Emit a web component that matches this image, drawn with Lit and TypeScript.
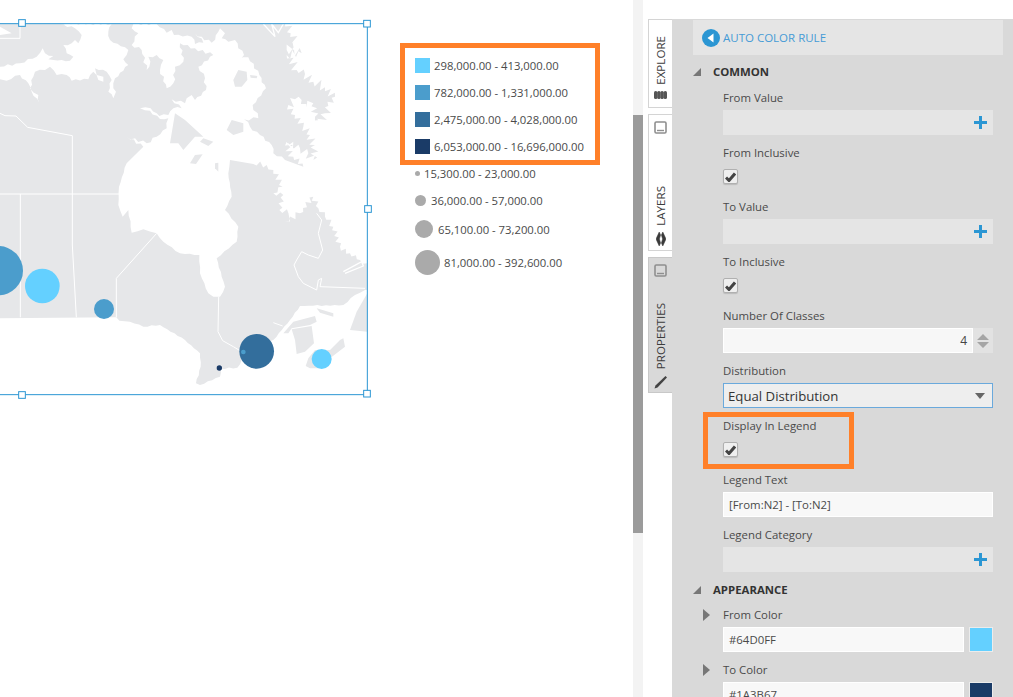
import { LitElement, html, css, svg } from "lit";
import { customElement } from "lit/decorators.js";

const LAND = "#e6e7e9";

let seed = 7;
const rnd = () => {
  seed = (seed * 16807) % 2147483647;
  return seed / 2147483647;
};
// Roughens a hand-traced coast: long edges get a deterministic zigzag.
function coast(src: string, amp: number, step = 11): string {
  const n = src.match(/-?\d+/g)!.map(Number);
  const out: string[] = [];
  for (let i = 0; i + 1 < n.length; i += 2) {
    const x = n[i], y = n[i + 1];
    out.push(`${x},${y}`);
    if (i + 3 < n.length && amp > 0) {
      const dx = n[i + 2] - x, dy = n[i + 3] - y;
      const len = Math.hypot(dx, dy);
      const k = Math.floor(len / step);
      for (let j = 1; j < k; j++) {
        const t = j / k;
        const a = (j % 2 ? 1 : -1) * amp * (0.3 + rnd() * 0.9);
        out.push(`${(x + dx * t - (dy / len) * a).toFixed(1)},${(y + dy * t + (dx / len) * a).toFixed(1)}`);
      }
    }
  }
  return out.join(" ");
}

const water = [
  "M" +
    coast("855,70 872,100 890,130 860,150 905,160 860,165 890,210 915,222 940,245 975,262 1005,290 985,318 975,340 962,370 945,350 940,310 920,322 905,300 885,298 865,315 885,345 910,380 930,405 945,435 940,480 925,460 900,445 860,425 880,470 910,500", 14, 8) + " " +
    coast("855,480 820,460 815,435 780,405 750,380 732,358 775,355 758,315 798,265 778,225 745,172 715,180 732,165 705,120 685,125 665,115 675,100 660,85 655,95 635,128 585,100 610,128 585,132 575,110 522,105 515,90 500,98 470,72 400,72 395,85 415,100 395,135 425,150 440,210 448,200 445,170 470,165 490,180 480,210 500,265 520,250 525,200 550,185 540,130 585,145 640,165 595,200 615,235 618,270 585,300 575,285 560,295 555,310 515,298 545,325 520,325 505,345 478,348 452,325 420,325 450,332 480,357 505,355 500,385 470,410 440,430 380,410 430,440", 4, 11) + " " +
    coast("380,490 357,560 355,615 368,650 385,630 395,698 430,688 470,700 490,725 540,760 598,765 600,820 625,880 640,890 660,890 675,860 665,830 650,775 710,725 715,680 675,630 695,590 685,520 690,480", 1.5, 14) + " " +
    coast("760,492 800,495 820,510 848,560 820,580 850,585 838,630 880,640 855,665 900,640 940,590 955,625 975,650 1000,680 1020,740 1050,760 1080,780 1102,790", 8, 9) +
    " 1110,790 1110,60 855,60 Z",
  "M" + coast("0,200 60,190 110,170 128,145 135,160 160,168 145,178 160,180 210,182 220,170 200,160 190,135 215,130 225,120 235,130 245,105 225,85 180,72 335,72 325,95 330,120 385,150 380,165 370,178 385,195 345,235 340,265 348,275 340,295 325,275 335,240 320,215 285,205 290,225 310,230 310,245 295,240 280,215 265,238 215,242 200,225 170,225 150,200 135,210 105,215 100,230 90,265 115,285 118,308 95,275 85,250 60,225 20,242 0,238", 3, 11) + " Z",
  "M0,80 L35,100 0,105 Z",
  "M-5,955 L349,952 " + coast("358,962 390,965 430,980 480,975 555,1020 600,1060 602,1100 588,1150 600,1155 660,1130 662,1106 712,1103 740,1060 820,1020 870,960 900,918 1030,915 1065,885 1095,870", 1.5, 12) + " 1110,870 1110,1195 -5,1195 Z",
];
const islands = [
  "M525,340 L555,360 610,410 585,410 550,450 535,430 510,430 Z",
  "M610,415 L640,425 625,438 600,425 Z",
  "M570,490 L585,465 608,463 588,492 Z",
  "M645,490 L655,488 655,515 645,505 Z",
  "M680,390 L695,360 730,370 730,395 700,405 Z",
  "M700,240 L715,210 740,215 742,240 725,260 705,260 Z",
  "M750,225 L772,228 770,235 752,233 Z",
  "M1102,880 L1070,935 1050,990 1102,995 Z",
  "M875,988 L935,978 942,1030 915,1055 890,1062 885,1020 Z",
  "M850,1000 L880,965 945,948 950,965 930,975 875,985 865,1000 Z",
  "M917,1098 L925,1075 945,1050 990,1050 1020,1020 1030,1015 1035,1040 990,1075 960,1105 930,1105 Z",
  "M950,925 L1000,940 1000,950 960,938 Z",
];
const borders = [
  "0,340 15,347 48,348 83,382 217,407 217,735 229,952",
  "0,582 357,582",
  "61,582 61,952",
  "470,700 349,835 349,952",
  "656,890 654,995 668,1022 700,1040 725,1055",
  "950,640 965,660 955,700 968,750 955,775 925,765 905,755 890,780 882,795 895,830 910,850 950,870 955,840 965,835 960,860 1095,865",
  "60,72 60,115 0,115",
  "820,968 848,978",
];
const spikes = [
  "M790,72 L825,110 815,72 835,98 850,72",
  "M1030,815 L1085,785 1090,798 1035,820",
  "M862,430 L935,500",
];
const circles: [number, number, number, string][] = [
  [-5, 812, 74, "#4b9dcc"],
  [127, 858, 52, "#64d0ff"],
  [312, 927, 30, "#4b9dcc"],
  [770, 1054, 52, "#336e9c"],
  [730, 1056, 7, "#4b9dcc"],
  [965, 1077, 30, "#64d0ff"],
  [658, 1104, 8, "#1a3b67"],
];
const handles: [number, number][] = [[66, 69], [1101, 71], [1104, 627], [66, 1185], [1101, 1181]];

const swatches: [string, string][] = [
  ["#64d0ff", "298,000.00 - 413,000.00"],
  ["#4b9dcc", "782,000.00 - 1,331,000.00"],
  ["#336e9c", "2,475,000.00 - 4,028,000.00"],
  ["#1a3b67", "6,053,000.00 - 16,696,000.00"],
];
const sizes: [number, number, number, string][] = [
  [5, 27, 4, "15,300.00 - 23,000.00"],
  [11, 27, 5, "36,000.00 - 57,000.00"],
  [18, 30, 5, "65,100.00 - 73,200.00"],
  [25, 37, 4, "81,000.00 - 392,600.00"],
];

const plus = html`<svg class="plus" viewBox="0 0 13 13"><path d="M5 0h3v5h5v3H8v5H5V8H0V5h5z"/></svg>`;
const minIcon = html`<svg class="min" viewBox="0 0 13 13"><rect x="1" y="1" width="11" height="11" rx="1.2" fill="none" stroke="#8f8f8f" stroke-width="1.6"/><path d="M3 9.5h7" stroke="#8f8f8f" stroke-width="1.4"/></svg>`;

@customElement("app-root")
export class AppRoot extends LitElement {
  static styles = css`
    :host { display: block; width: 1013px; height: 697px; }
    .page { position: relative; display: flex; width: 1013px; height: 697px; overflow: hidden; background: #fff;
      font-family: "Open Sans", "Liberation Sans", sans-serif; font-size: 11.4px; color: #444; }
    .canvas { position: relative; width: 633px; flex: none; }
    .map { position: absolute; left: 0; top: 0; width: 400px; height: 410px; }
    .legend { position: absolute; left: 415px; top: 52px; display: flex; flex-direction: column; color: #4a4a4a; font-size: 11.3px; }
    .row { display: flex; align-items: center; gap: 4px; white-space: nowrap; }
    .sw { width: 15px; height: 15px; }
    .dot { border-radius: 50%; background: #aaa; }
    .rail { width: 10px; flex: none; background: #f3f3f3; }
    .thumb { margin-top: 115px; height: 418px; background: #9b9b9b; }
    .tabs { width: 29px; flex: none; padding: 19px 0 0 5px; box-sizing: border-box; display: flex; flex-direction: column; gap: 6px; }
    .tab { width: 24px; box-sizing: border-box; border: 1px solid #d4d4d4; border-right: 0; display: flex; flex-direction: column; align-items: center; color: #3c3c3c; background: #fff; }
    .tab.on { background: #d9d9d9; border-color: #c8c8c8; }
    .t1 { height: 89px; } .t2 { height: 137px; } .t3 { height: 136px; }
    .vt { writing-mode: vertical-rl; transform: rotate(180deg); line-height: 14px; white-space: nowrap; font-size: 11.6px; }
    .t1 .vt { margin-top: 16px; }
    .t2 .vt { margin-top: 52px; }
    .t3 .vt { margin-top: 26px; }
    .min { width: 13px; height: 13px; margin-top: 6px; flex: none; }
    .ic { flex: none; margin-top: 6px; }
    .panel { flex: 1; margin-top: 19px; background: #d9d9d9; padding: 1px 20px 0 21px; box-sizing: border-box; min-width: 0; }
    .bar { height: 35px; margin-right: -10px; background: #e5e5e5; display: flex; align-items: center; gap: 3px; padding-left: 9px; color: #459bd6; font-size: 11.5px; }
    .back { width: 18px; height: 18px; flex: none; }
    .sec { position: relative; height: 16px; line-height: 16px; padding-left: 20px; font-weight: 700; color: #333; font-size: 11.4px; }
    .sec svg { position: absolute; left: 0; top: 4px; width: 8px; height: 8px; }
    .s1 { margin: 9px 0 10px; }
    .s2 { margin: 0 0 9px; }
    .body { padding-left: 30px; }
    .f { height: 55px; }
    .f.c { height: 54px; }
    .l { position: relative; height: 16px; line-height: 16px; margin-bottom: 4px; color: #4a4a4a; }
    .c .l { margin-bottom: 8px; }
    .exp { position: absolute; left: -20px; top: 2px; width: 7px; height: 12px; }
    .in { height: 25px; box-sizing: border-box; background: #e5e5e5; display: flex; align-items: center; justify-content: flex-end; padding-right: 6px; }
    .in.w { background: #f8f8f8; justify-content: flex-start; padding: 0 0 0 5px; border: 1px solid #fff; color: #4a4a4a; }
    .plus { width: 13px; height: 13px; fill: #2b96d3; }
    .num { display: flex; height: 25px; }
    .num .v { flex: 1; background: #f7f7f7; border: 1px solid #fff; text-align: right; line-height: 23px; padding-right: 5px; font-size: 12px; }
    .spin { width: 20px; flex: none; background: #e2e2e2; display: flex; align-items: center; justify-content: center; }
    .spin svg { width: 12px; height: 14px; }
    .sel { height: 25px; box-sizing: border-box; background: #eee; border: 1px solid #6aa9dc; display: flex; align-items: center; justify-content: space-between; padding: 0 5px 0 4px; font-size: 13.2px; color: #333; }
    .sel svg { width: 10px; height: 6px; margin-right: 2px; }
    .cb { width: 15px; height: 15px; box-sizing: border-box; border: 1px solid #b0b0b0; border-radius: 2px; background: #efefef; box-shadow: 0 1px 1px #bbb; display: flex; align-items: center; justify-content: center; }
    .cb svg { width: 11px; height: 10px; }
    .color { display: flex; gap: 5px; }
    .color .in { flex: 1; }
    .chip { width: 24px; height: 25px; box-sizing: border-box; border: 1px solid #ececec; flex: none; }
    .hl { position: absolute; box-sizing: border-box; border: 5px solid #ff8029; }
    .h1 { left: 400px; top: 43px; width: 200px; height: 122px; }
    .h2 { left: 703px; top: 412px; width: 151px; height: 57px; }
  `;

  private map() {
    return html`<svg class="map" viewBox="0 0 1200 1230">
      <defs><clipPath id="frame"><rect x="0" y="71" width="1102" height="1113"/></clipPath></defs>
      <g clip-path="url(#frame)">
        <rect x="0" y="71" width="1102" height="1113" fill=${LAND}/>
        ${water.map((d) => svg`<path d=${d} fill="#fff"/>`)}
        ${islands.map((d) => svg`<path d=${d} fill=${LAND}/>`)}
        ${borders.map((p) => svg`<polyline points=${p} fill="none" stroke="#fff" stroke-width="3"/>`)}
        ${spikes.map((d) => svg`<path d=${d} fill="none" stroke="#fff" stroke-width="4"/>`)}
        ${circles.map(([x, y, r, c]) => svg`<circle cx=${x} cy=${y} r=${r} fill=${c}/>`)}
      </g>
      <path d="M0 71H1102V1184H0" fill="none" stroke="#2b96d3" stroke-width="3"/>
      ${handles.map(([x, y]) => svg`<rect x=${x - 10} y=${y - 10} width="20" height="20" fill="#fff" stroke="#2b96d3" stroke-width="3"/>`)}
    </svg>`;
  }

  private field(label: string, kind = "") {
    return html`<div class="f"><div class="l">${label}</div><div class="in">${kind === "plus" ? plus : ""}</div></div>`;
  }
  private check(label: string) {
    return html`<div class="f c"><div class="l">${label}</div><div class="cb"><svg viewBox="0 0 11 10"><path d="M1 5.5 4 8.5 10 1.5" fill="none" stroke="#444" stroke-width="3"/></svg></div></div>`;
  }
  private colorField(label: string, value: string, c: string) {
    return html`<div class="f"><div class="l"><svg class="exp" viewBox="0 0 7 12"><path d="M0 0 7 6 0 12z" fill="#777"/></svg>${label}</div>
      <div class="color"><div class="in w">${value}</div><div class="chip" style="background:${c}"></div></div></div>`;
  }
  private corner() {
    return html`<svg viewBox="0 0 8 8"><path d="M8 0V8H0z" fill="#777"/></svg>`;
  }

  render() {
    return html`<div class="page">
      <div class="canvas">
        ${this.map()}
        <div class="legend">
          ${swatches.map(([c, t]) => html`<div class="row" style="height:27px"><div class="sw" style="background:${c}"></div><span>${t}</span></div>`)}
          ${sizes.map(([d, h, g, t]) => html`<div class="row" style="height:${h}px;gap:${g}px"><div class="dot" style="width:${d}px;height:${d}px"></div><span>${t}</span></div>`)}
        </div>
      </div>
      <div class="rail"><div class="thumb"></div></div>
      <div class="tabs">
        <div class="tab t1">
          <div class="vt">EXPLORE</div>
          <svg class="ic" width="13" height="8" viewBox="0 0 13 8"><g fill="#555"><rect x="0" y="0" width="3.4" height="8" rx="1.6"/><rect x="3.2" y="0" width="3.4" height="8" rx="1.6"/><rect x="6.4" y="0" width="3.4" height="8" rx="1.6"/><rect x="9.6" y="0" width="3.4" height="8" rx="1.6"/></g></svg>
        </div>
        <div class="tab t2">
          ${minIcon}
          <div class="vt">LAYERS</div>
          <svg class="ic" width="10" height="14" viewBox="0 0 10 14"><path d="M3.2 0 0 7 3.2 14 4.6 11 3.4 7 4.6 3zM6.8 0 5.4 3 6.6 7 5.4 11 6.8 14 10 7z" fill="#3a3a3a" stroke="#3a3a3a" stroke-width=".5"/></svg>
        </div>
        <div class="tab t3 on">
          ${minIcon}
          <div class="vt">PROPERTIES</div>
          <svg class="ic" width="14" height="14" viewBox="0 0 14 14"><path d="M0.5 13.5 1.5 10.5 11.5 1 13 2.5 3.5 12.5z" fill="#444"/></svg>
        </div>
      </div>
      <div class="panel">
        <div class="bar">
          <svg class="back" viewBox="0 0 18 18"><circle cx="9" cy="9" r="9" fill="#2b96d3"/><path d="M11.5 4.5v9L5.5 9z" fill="#fff"/></svg>
          <span>AUTO COLOR RULE</span>
        </div>
        <div class="sec s1">${this.corner()}COMMON</div>
        <div class="body">
          ${this.field("From Value", "plus")}
          ${this.check("From Inclusive")}
          ${this.field("To Value", "plus")}
          ${this.check("To Inclusive")}
          <div class="f"><div class="l">Number Of Classes</div>
            <div class="num"><div class="v">4</div><div class="spin"><svg viewBox="0 0 12 14"><path d="M6 0 12 6H0zM0 8H12L6 14z" fill="#a5a5a5"/></svg></div></div></div>
          <div class="f"><div class="l">Distribution</div>
            <div class="sel"><span>Equal Distribution</span><svg viewBox="0 0 10 6"><path d="M0 0H10L5 6z" fill="#666"/></svg></div></div>
          ${this.check("Display In Legend")}
          <div class="f"><div class="l">Legend Text</div><div class="in w">[From:N2] - [To:N2]</div></div>
          ${this.field("Legend Category", "plus")}
        </div>
        <div class="sec s2">${this.corner()}APPEARANCE</div>
        <div class="body">
          ${this.colorField("From Color", "#64D0FF", "#64d0ff")}
          ${this.colorField("To Color", "#1A3B67", "#1a3b67")}
        </div>
      </div>
      <div class="hl h1"></div>
      <div class="hl h2"></div>
    </div>`;
  }
}
